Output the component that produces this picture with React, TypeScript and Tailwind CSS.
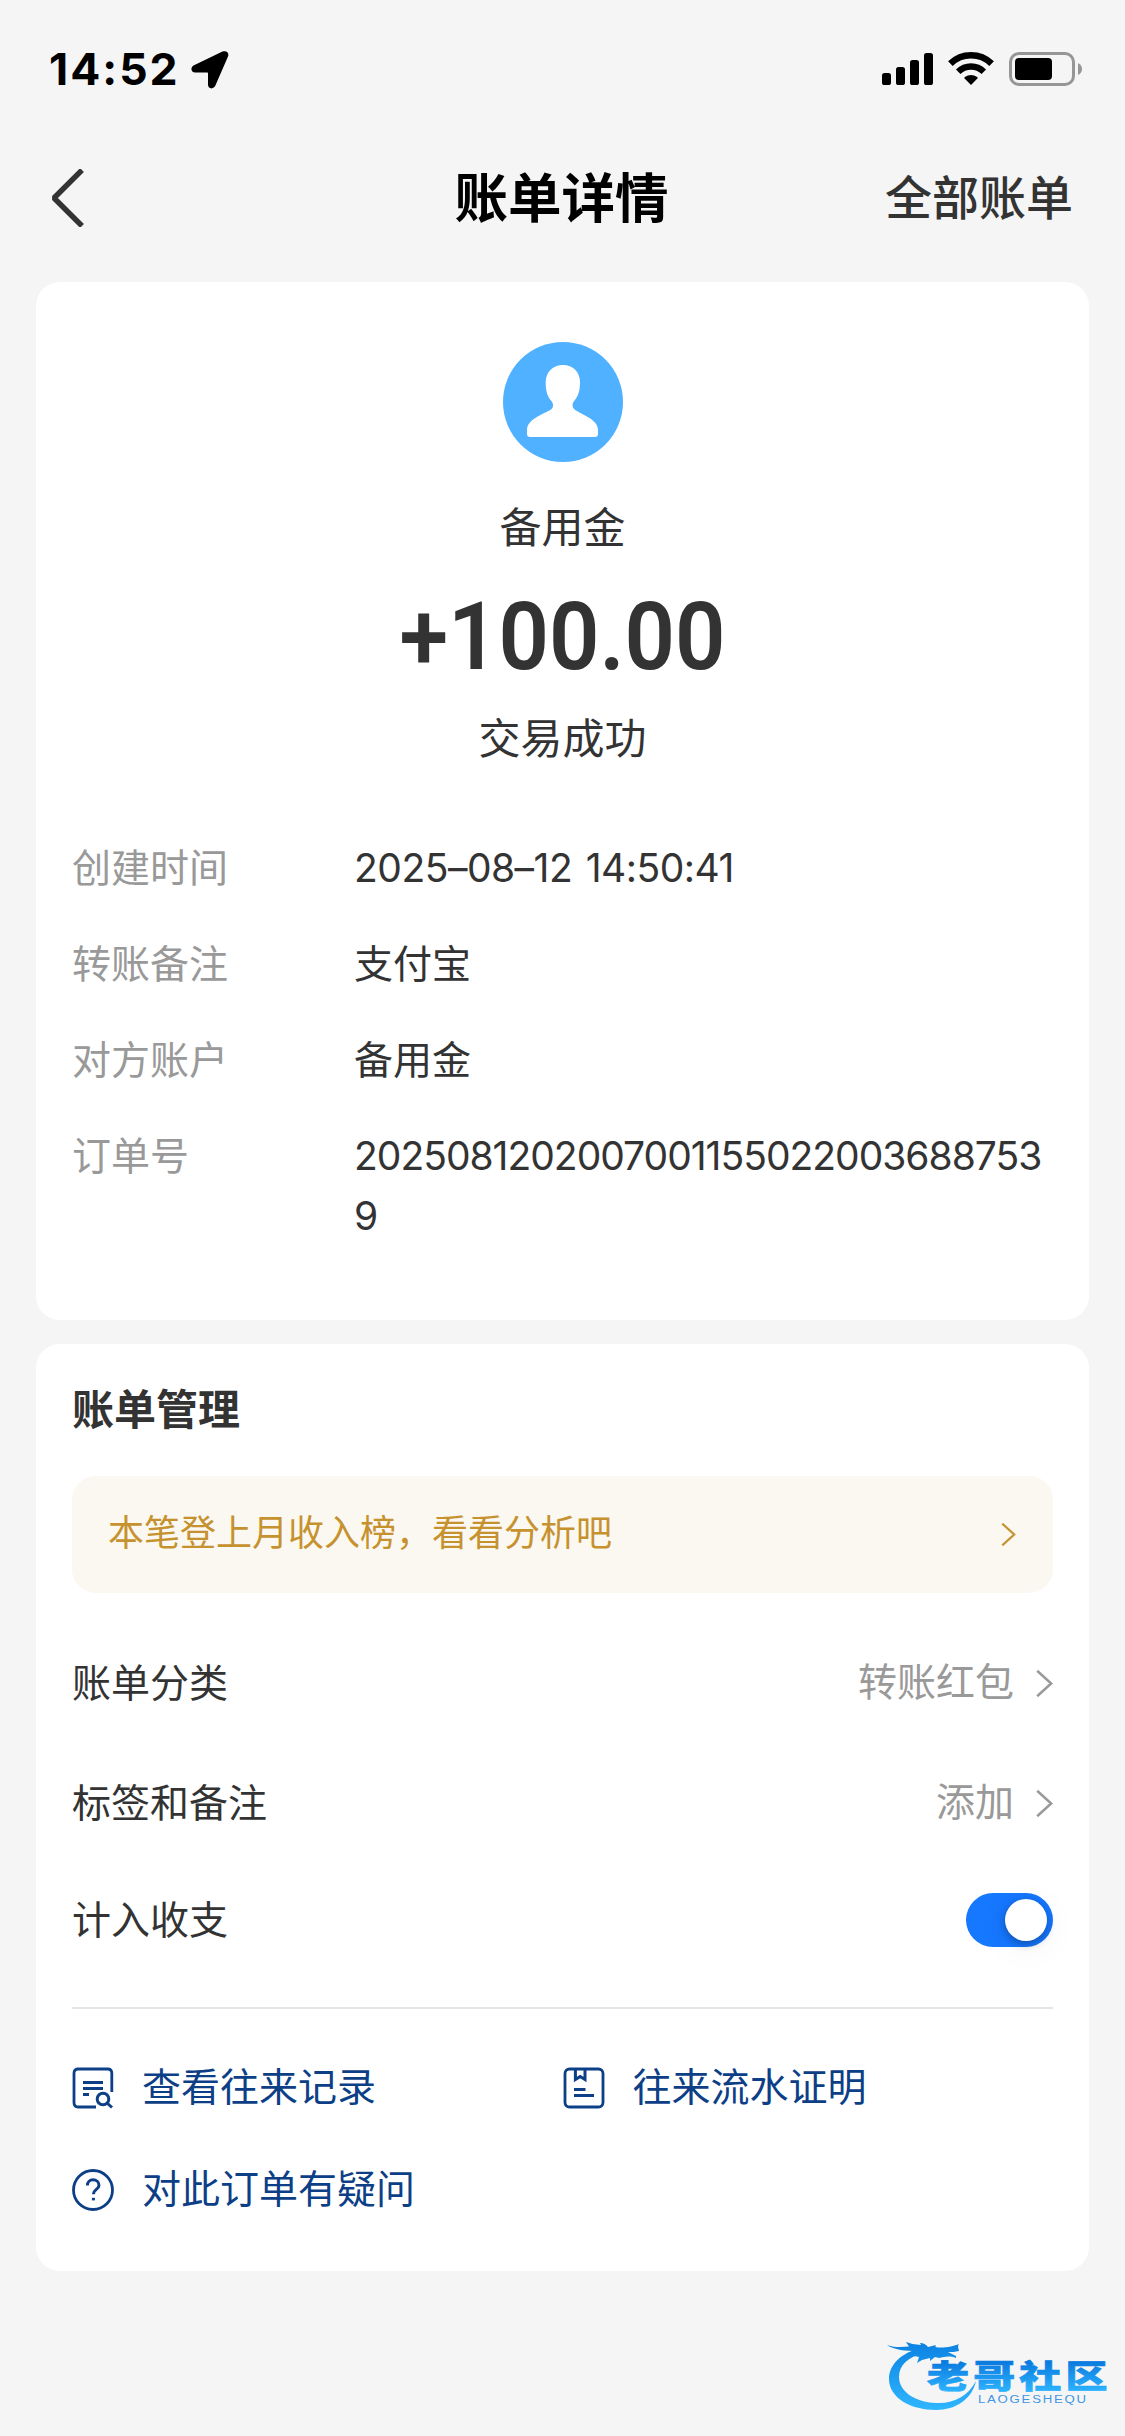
import type { ReactNode } from "react"
import clsx from "clsx"

const details = [
  {
    label: "创建时间",
    value: "2025–08–12 14:50:41",
    className: "tracking-[-0.5px] [word-spacing:3px]",
  },
  { label: "转账备注", value: "支付宝" },
  { label: "对方账户", value: "备用金" },
  {
    label: "订单号",
    value: "20250812020070011550220036887539",
    className: "tracking-[-1px]",
  },
]

function StatusBar() {
  return (
    <div className="flex h-[138px] items-start justify-between pt-[51px] pr-[42px] pl-[49px]">
      <div className="flex items-start gap-[11px]">
        <span className="text-[44.5px] leading-9 font-bold tracking-[2px] text-black">
          14:52
        </span>
        <svg width="38" height="38" viewBox="0 0 38 38">
          <path d="M31.5 .6C35.6 -.8 38.4 1.6 37 5.6L24.4 34.6C22.6 38.8 17 38 17 33.8V22.2Q17 21.6 16.4 21.6H4.2C-.2 21.6 -1 16 3 14.2Z" />
        </svg>
      </div>
      <div className="flex items-start">
        <svg width="52" height="36" viewBox="0 0 52 36">
          <rect x="0" y="22" width="9" height="12" rx="2.6" />
          <rect x="14" y="16" width="9" height="18" rx="2.6" />
          <rect x="28" y="9" width="9" height="25" rx="2.6" />
          <rect x="42" y="2" width="9" height="32" rx="2.6" />
        </svg>
        <svg
          width="46"
          height="36"
          viewBox="0 0 46 36"
          className="ml-3.5"
          fill="none"
          stroke="#000"
        >
          <path d="M2.4 12.6A29.5 29.5 0 0 1 43.6 12.6" strokeWidth="6.6" />
          <path d="M10.2 20.7A18.3 18.3 0 0 1 35.8 20.7" strokeWidth="6.4" />
          <path
            d="M23 34L16.6 27.4Q16 26.6 16.8 26Q23 22 29.2 26Q30 26.6 29.4 27.4Z"
            fill="#000"
            stroke="none"
          />
        </svg>
        <svg width="74" height="36" viewBox="0 0 74 36" className="ml-[15px]">
          <rect
            x="1.5"
            y="2.5"
            width="63"
            height="31"
            rx="8.5"
            fill="none"
            stroke="#969696"
            strokeWidth="3"
          />
          <rect x="6" y="7" width="37" height="22" rx="4" />
          <path d="M69 12Q73 14 73 18Q73 22 69 24Z" fill="#969696" />
        </svg>
      </div>
    </div>
  )
}

function NavBar() {
  return (
    <header className="grid h-36 grid-cols-3 items-start pr-[52px] pl-[50px]">
      <svg
        width="35"
        height="58"
        viewBox="0 0 35 58"
        className="mt-[31px]"
        fill="none"
        stroke="#333"
        strokeWidth="5.4"
      >
        <path d="M32 1L4 29L32 57" strokeLinejoin="bevel" />
      </svg>
      <h1 className="mt-[25px] text-center text-[53.5px] leading-[72px] font-bold whitespace-nowrap text-black">
        账单详情
      </h1>
      <span className="mt-[24px] text-right text-[47px] leading-[72px] font-medium whitespace-nowrap">
        全部账单
      </span>
    </header>
  )
}

function Chevron({ small }: { small?: boolean }) {
  return (
    <svg
      width={small ? 15 : 17}
      height={small ? 23 : 27}
      viewBox="0 0 17 27"
      fill="none"
      stroke="currentColor"
      strokeWidth="2.6"
    >
      <path d="M1.2 .8L15.2 13.5L1.2 26.2" />
    </svg>
  )
}

function Avatar() {
  return (
    <svg width="120" height="120" viewBox="0 0 120 120">
      <circle cx="60" cy="60" r="60" fill="#4fb1ff" />
      <path
        d="M60 23C70 23 77 30 77 40C77 48 75.500 54 71.500 58.500C68.500 62 69 66 73 68.500C82 74 95 78 95 88V92Q95 95 92 95H27Q24 95 24 92V88C24 78 38 73 46.500 68.500C51 66 51 62 48 58.500C44 54 42.700 48 42.700 40C42.700 30 50 23 60 23Z"
        fill="#fff"
      />
    </svg>
  )
}

function SettingRow({
  label,
  className,
  children,
}: {
  label: string
  className?: string
  children: ReactNode
}) {
  return (
    <div
      className={clsx(
        "flex items-center justify-between text-[39px] leading-[60px]",
        className
      )}
    >
      <span>{label}</span>
      {children}
    </div>
  )
}

function RowValue({ text }: { text: string }) {
  return (
    <span className="flex items-center gap-[22px] text-[#999]">
      <span className="pb-[3px] leading-[57px]">{text}</span>
      <Chevron />
    </span>
  )
}

function RecordIcon() {
  return (
    <svg width="42" height="42" viewBox="0 0 42 42" fill="none" stroke="#0d3f87" strokeWidth="2.8">
      <path d="M24 40H6.200Q2 40 2 35.800V6.200Q2 2 6.200 2H35.600Q39.800 2 39.800 6.200V25" />
      <path d="M11 15.500H31M11 21.500H31M11 27.600H17" strokeWidth="3" />
      <circle cx="31" cy="32" r="5.800" strokeWidth="3" />
      <path d="M35 36L40 40.500" strokeWidth="3" />
    </svg>
  )
}

function ProofIcon() {
  return (
    <svg width="42" height="42" viewBox="0 0 42 42" fill="none" stroke="#0d3f87" strokeWidth="2.8">
      <rect x="2" y="2" width="38" height="38" rx="4.500" />
      <path d="M12.400 2V12.600L17.200 9.600L22 12.600V2" strokeWidth="3" />
      <path d="M11 22.400H22.500M11 28.400H31" strokeWidth="3" />
    </svg>
  )
}

function HelpIcon() {
  return (
    <svg width="42" height="42" viewBox="0 0 42 42" fill="none" stroke="#0d3f87" strokeWidth="2.8">
      <circle cx="21" cy="21" r="19.500" />
      <path
        d="M15.400 16.600C15.400 12.800 18 10.800 21 10.800C24.400 10.800 27 13 27 16.200C27 20.400 21.400 20.400 21.400 25.200"
        strokeWidth="3"
      />
      <path d="M21.400 28.800V31.400" strokeWidth="3" />
    </svg>
  )
}

function ActionLink({ icon, text }: { icon: ReactNode; text: string }) {
  return (
    <a className="flex items-center gap-7 text-[39px] leading-[60px] text-[#0d3f87]">
      {icon}
      <span className="pb-[3px] leading-[57px]">{text}</span>
    </a>
  )
}

function CommunityLogo() {
  return (
    <svg width="226" height="84" viewBox="0 0 226 84" fill="url(#logo)">
      <defs>
        <linearGradient id="logo" gradientUnits="userSpaceOnUse" x1="0" y1="8" x2="0" y2="78">
          <stop offset="0" stopColor="#0a7fe0" />
          <stop offset="1" stopColor="#2fb6ff" />
        </linearGradient>
        <linearGradient id="word" x1="0" y1="0" x2="0" y2="1">
          <stop offset=".25" stopColor="#0a7ce0" />
          <stop offset=".9" stopColor="#2fb6ff" />
        </linearGradient>
      </defs>
      <path d="M34 17C16 22 3 33 3 48C3 67 25 79 50 79C70 79 86 68 90 50C82 65 68 73 50 72C28 71 13 60 13 46C13 34 22 26 38 22Z" />
      <path d="M1 14C10 17 17 16 23 15.500L20 11Q27 14 35 14L34 12Q39 12 42 16L50 14Q48 16 52 16.500C60 17 68 15 73 13C71 16 73 18 73 20C69 21 66 21 62 21L70 25L70 27C63 24 58 26 53 27L49 26L44 30L44 27L36 29L31 32L33 26L28 25L31 20C20 20 8 19 1 14Z" />
      <text
        transform="translate(41 57) scale(1.2 .92)"
        className="font-['Noto_Sans_CJK_SC',sans-serif] font-black"
        fontSize="35"
        letterSpacing="3.5"
        fill="url(#word)"
        stroke="url(#word)"
        strokeWidth=".8"
      >
        老哥社区
      </text>
      <text
        transform="translate(92 71.5) scale(1.2 1)"
        className="font-['Liberation_Sans',sans-serif]"
        fontSize="11"
        textLength="90"
        fill="#3f97e4"
      >
        LAOGESHEQU
      </text>
    </svg>
  )
}

export default function App() {
  return (
    <div
      lang="zh-CN"
      className="flex h-[2436px] w-[1125px] flex-col bg-[#f5f5f5] font-['Inter','Noto_Sans_CJK_SC',sans-serif] text-[#333]"
    >
      <StatusBar />
      <NavBar />

      <main className="flex flex-col gap-6 px-9">
        <section className="h-[1038px] rounded-3xl bg-white px-9 pt-[60px]">
          <div className="flex flex-col items-center">
            <Avatar />
            <p className="mt-9 text-[42px] leading-[60px]">备用金</p>
            <p className="mt-[25px] scale-x-[0.94] font-['Roboto',sans-serif] text-[94px] leading-[108px] font-semibold">
              +100.00
            </p>
            <p className="mt-[18px] text-[42px] leading-[60px]">交易成功</p>
          </div>

          <dl className="mt-[69px] flex flex-col gap-9 text-[39px] leading-[60px]">
            {details.map(({ label, value, className }) => (
              <div key={label} className="flex">
                <dt className="w-[282px] shrink-0 text-[#999]">{label}</dt>
                <dd className={clsx("w-[692px] break-all", className)}>
                  {value}
                </dd>
              </div>
            ))}
          </dl>
        </section>

        <section className="h-[927px] rounded-3xl bg-white px-9 pt-9">
          <h2 className="text-[42px] leading-[60px] font-bold">账单管理</h2>
          <div className="mt-9 flex h-[117px] items-center justify-between rounded-3xl bg-[#fbf8f1] pr-[37px] pl-9 text-[36px] text-[#c6922f]">
            <span className="pb-[3px]">本笔登上月收入榜，看看分析吧</span>
            <Chevron small />
          </div>

          <SettingRow label="账单分类" className="mt-[60px]">
            <RowValue text="转账红包" />
          </SettingRow>
          <SettingRow label="标签和备注" className="mt-[60px]">
            <RowValue text="添加" />
          </SettingRow>
          <SettingRow label="计入收支" className="mt-[57px]">
            <button
              role="switch"
              aria-checked="true"
              className="flex h-[54px] w-[87px] items-center justify-end rounded-full bg-[#1677ff] pr-1.5"
            >
              <span className="size-[42px] rounded-full bg-white shadow-[0_6px_36px_rgba(0,0,0,0.06),0_3px_9px_rgba(0,0,0,0.3)]" />
            </button>
          </SettingRow>

          <div className="mt-[57px] h-0.5 bg-[#e5e5e5]" />

          <div className="mt-[49px] grid grid-cols-2 gap-y-[42px]">
            <ActionLink icon={<RecordIcon />} text="查看往来记录" />
            <ActionLink icon={<ProofIcon />} text="往来流水证明" />
            <ActionLink icon={<HelpIcon />} text="对此订单有疑问" />
          </div>
        </section>
      </main>

      <footer className="mt-[60px] flex justify-end pr-[13px]">
        <CommunityLogo />
      </footer>
    </div>
  )
}
